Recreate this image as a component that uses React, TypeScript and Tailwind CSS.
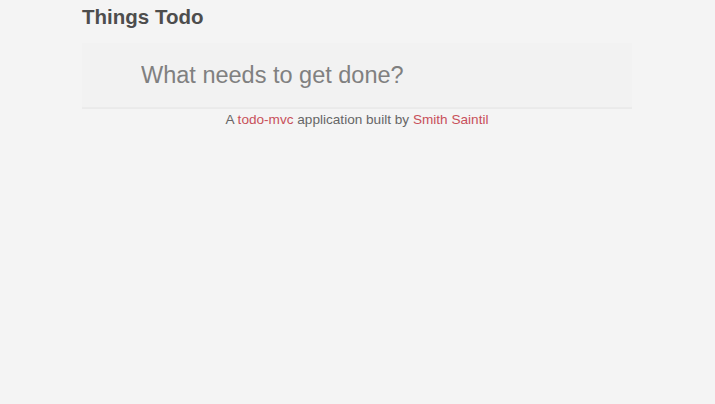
export default function App() {
  return (
    <div className="min-h-[404px] bg-[#f4f4f4] font-['Liberation_Sans',Arial,sans-serif] text-[#4d4d4d]">
      <section className="ml-[82px] w-[550px]">
        <h1 className="pt-[3px] text-[20.5px] font-bold leading-[28px] text-[#4d4d4d]">Things Todo</h1>
        <header className="mt-[12px]">
          <input
            placeholder="What needs to get done?"
            className="block w-full bg-[#f2f2f2] py-4 pr-4 pl-[59px] text-[23.5px] leading-[33.6px] font-light text-[#4d4d4d] shadow-[inset_0_-2px_1px_rgba(0,0,0,0.03)] outline-none placeholder:text-[#808080]"
          />
        </header>
        <p className="mt-[1px] text-center text-[13.6px] leading-[20px] font-light text-[#666]">
          A <a className="text-[#c8505a]">todo-mvc</a> application built by{" "}
          <a className="text-[#c8505a]">Smith Saintil</a>
        </p>
      </section>
    </div>
  );
}
